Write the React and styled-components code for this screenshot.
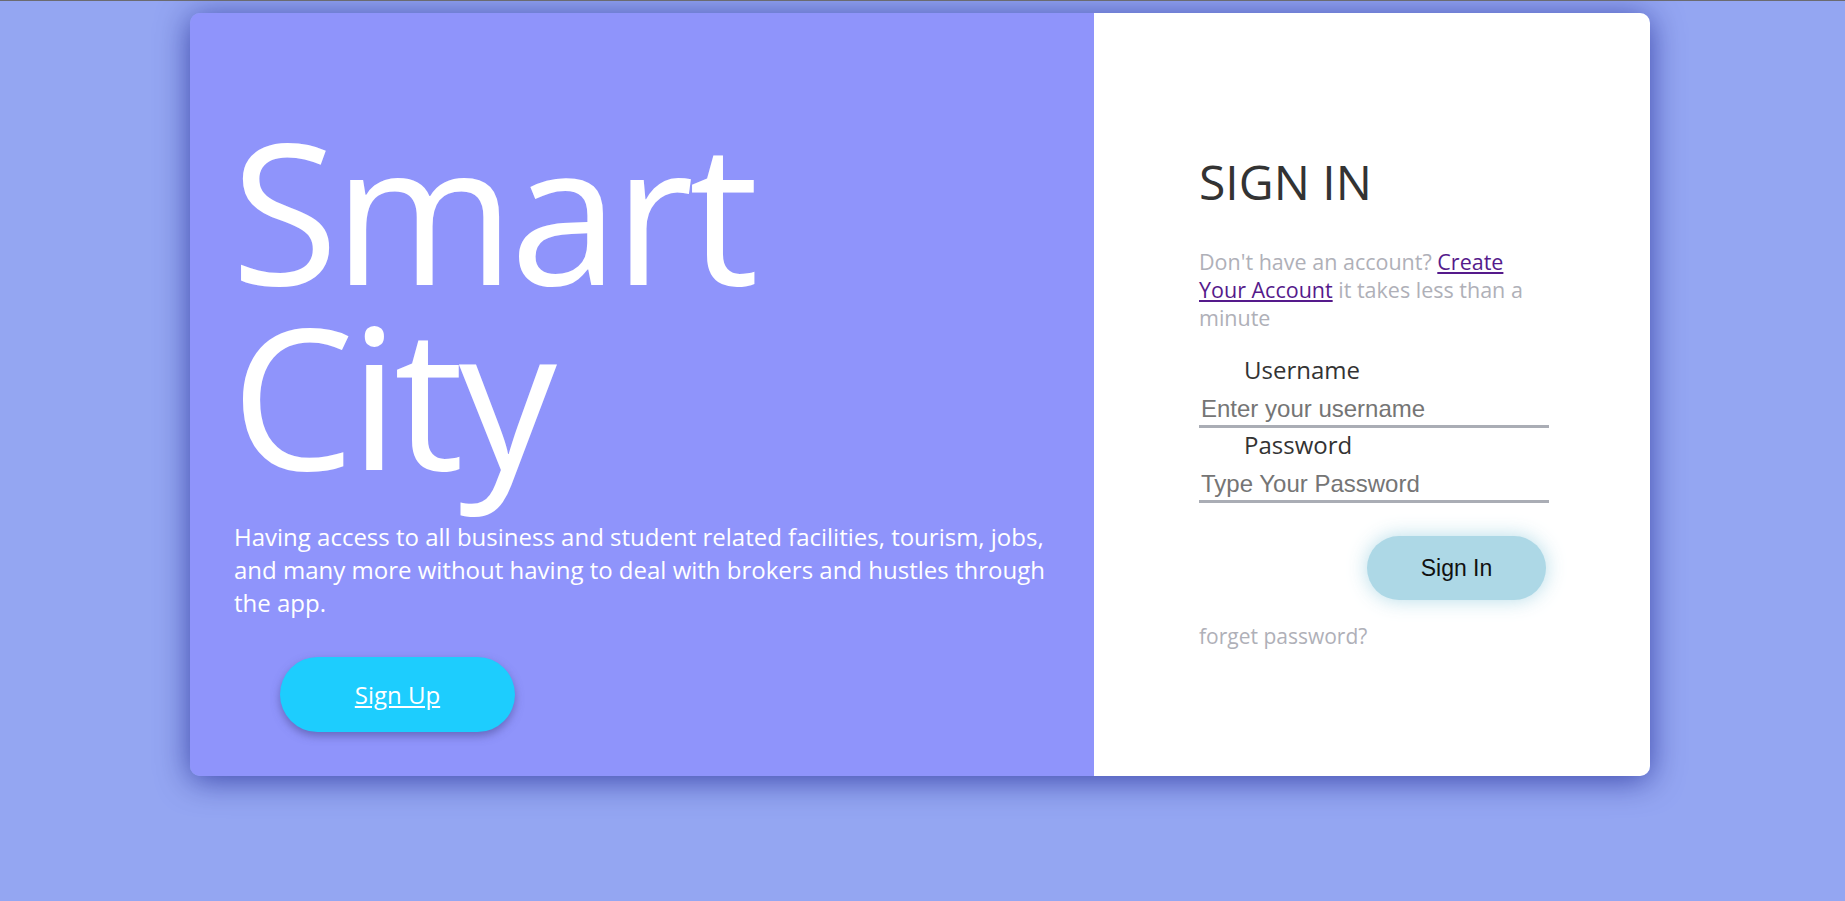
import React from "react";
import styled, { createGlobalStyle } from "styled-components";

const Global = createGlobalStyle`
  html, body { margin: 0; padding: 0; }
  body {
    background: #94a6f2;
    border-top: 1px solid #6b6b70;
    font-family: "Open Sans", sans-serif;
    min-height: 900px;
  }
`;

const Page = styled.div`
  padding: 12px 0 0 190px;
`;

const Card = styled.div`
  display: flex;
  width: 1460px;
  height: 763px;
  border-radius: 10px;
  overflow: hidden;
  box-shadow: 0 4px 32px rgba(55, 65, 165, 0.95);
`;

const Hero = styled.section`
  width: 904px;
  flex: none;
  background: #8f94fb;
  padding: 104px 30px 0 44px;
  box-sizing: border-box;
  color: #fff;
`;

const Title = styled.h1`
  margin: 0 0 0 -3px;
  font-family: "Open Sans", sans-serif;
  font-weight: 400;
  font-size: 196px;
  line-height: 185px;
  letter-spacing: -5px;
  color: #fff;
`;

const Lead = styled.p`
  margin: 33px 0 0;
  font-size: 24px;
  line-height: 33px;
  color: #fff;
  max-width: 830px;
`;

const SignUp = styled.a`
  display: flex;
  align-items: center;
  justify-content: center;
  margin: 38px 0 0 46px;
  width: 235px;
  height: 75px;
  border-radius: 38px;
  background: #1dcdfe;
  color: #fff;
  font-size: 24px;
  text-decoration: underline;
  box-shadow: 0 4px 8px rgba(70, 70, 140, 0.55);
  cursor: pointer;
`;

const Side = styled.section`
  flex: 1;
  background: #fff;
  padding: 133px 0 0 105px;
  box-sizing: border-box;
`;

const Form = styled.form`
  width: 350px;
  display: flex;
  flex-direction: column;
`;

const Heading = styled.h2`
  margin: 0;
  font-weight: 400;
  font-size: 48px;
  line-height: 71px;
  color: #333;
`;

const Hint = styled.p`
  margin: 31px 0 0;
  max-width: 340px;
  font-size: 21.5px;
  line-height: 28px;
  color: #afb0b8;
`;

const Link = styled.a`
  color: #551a8b;
  text-decoration: underline;
`;

const Label = styled.label`
  display: block;
  margin-top: ${(p) => (p.$first ? "21px" : "0")};
  padding-left: 45px;
  font-size: 24px;
  line-height: 33px;
  color: #333;
`;

const Input = styled.input`
  display: block;
  width: 100%;
  box-sizing: border-box;
  border: none;
  border-bottom: 3px solid #aaadb5;
  outline: none;
  padding: 8px 2px 1px;
  font-family: "Liberation Sans", Arial, sans-serif;
  font-size: 24px;
  line-height: 30px;
  color: #333;
  background: transparent;
  &::placeholder { color: #757575; }
`;

const SubmitRow = styled.div`
  display: flex;
  justify-content: flex-end;
  margin-top: 33px;
  padding-right: 3px;
`;

const Submit = styled.button`
  width: 179px;
  height: 64px;
  border: none;
  border-radius: 32px;
  background: #add8e6;
  color: #111;
  font-family: "Liberation Sans", Arial, sans-serif;
  font-size: 23px;
  box-shadow: 0 0 20px rgba(173, 216, 230, 0.9);
  cursor: pointer;
`;

const Forgot = styled.p`
  margin: 22px 0 0;
  font-size: 21px;
  line-height: 29px;
  color: #afb0b8;
`;

export default function App() {
  return (
    <>
      <Global />
      <Page>
        <Card>
          <Hero>
            <Title>
              Smart
              <br />
              City
            </Title>
            <Lead>
              Having access to all business and student related facilities,
              tourism, jobs, and many more without having to deal with brokers
              and hustles through the app.
            </Lead>
            <SignUp>Sign Up</SignUp>
          </Hero>
          <Side>
            <Form onSubmit={(e) => e.preventDefault()}>
              <Heading>SIGN IN</Heading>
              <Hint>
                Don't have an account? <Link>Create Your Account</Link> it takes
                less than a minute
              </Hint>
              <Label $first>Username</Label>
              <Input placeholder="Enter your username" />
              <Label>Password</Label>
              <Input type="password" placeholder="Type Your Password" />
              <SubmitRow>
                <Submit type="submit">Sign In</Submit>
              </SubmitRow>
              <Forgot>forget password?</Forgot>
            </Form>
          </Side>
        </Card>
      </Page>
    </>
  );
}
